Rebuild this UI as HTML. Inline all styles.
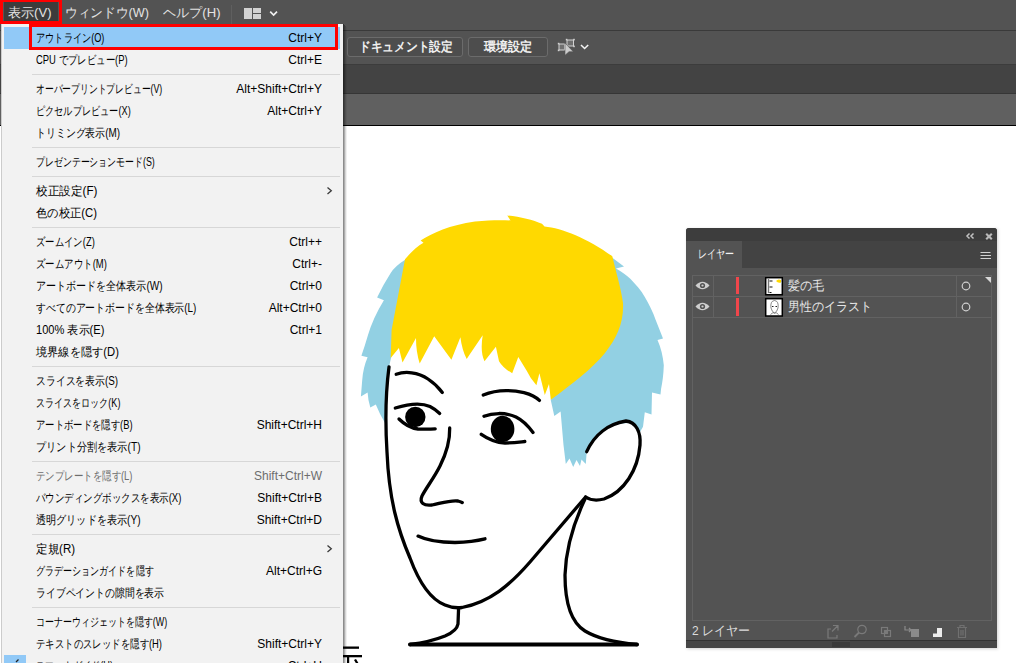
<!DOCTYPE html>
<html><head><meta charset="utf-8">
<style>
*{margin:0;padding:0;box-sizing:border-box}
html,body{width:1016px;height:663px;overflow:hidden;background:#fff;font-family:"Liberation Sans",sans-serif}
.a{position:absolute}
#menubar{left:0;top:0;width:1016px;height:30px;background:#535353}
#l30{left:0;top:30px;width:1016px;height:1px;background:#3a3a3a}
#ctrl{left:0;top:31px;width:1016px;height:33px;background:#535353}
#l64{left:0;top:64px;width:1016px;height:1px;background:#3c3c3c}
#tabs{left:0;top:65px;width:1016px;height:28px;background:#434343}
#l93{left:0;top:93px;width:1016px;height:1px;background:#363636}
#rul{left:0;top:94px;width:1016px;height:31px;background:#606060}
#l125{left:0;top:125px;width:1016px;height:1px;background:#000}
.mb{top:5px;font-size:13px;color:#e3e3e3;line-height:16px;white-space:nowrap}
.btn{top:37px;height:20px;border:1px solid #6b6b6b;border-radius:3px;background:#4d4d4d;color:#f0f0f0;font-size:12px;line-height:18px;text-align:center;font-weight:bold}
#menu{left:1px;top:24px;width:342px;height:660px;background:#f2f2f2}
.it{position:absolute;left:35px;width:290px;height:22px;font-size:12px;line-height:22px;color:#000;white-space:nowrap}
.it .k{position:absolute;right:4px;top:0}
.sep{position:absolute;left:31px;width:308px;height:1px;background:#d7d7d7}
.dis{color:#6d6d6d}
.fit{display:inline-block;white-space:nowrap;transform-origin:0 50%}
.bt{top:38px;height:18px;font-size:13px;line-height:18px;color:#f0f0f0;font-weight:bold;white-space:nowrap}
.pt{font-size:13px;line-height:14px;color:#e6e6e6;white-space:nowrap}
.arr{position:absolute;left:324px}
</style></head><body>
<div id="menubar" class="a"></div>
<div id="l30" class="a"></div>
<div id="ctrl" class="a"></div>
<div id="l64" class="a"></div>
<div id="tabs" class="a"></div>
<div id="l93" class="a"></div>
<div id="rul" class="a"></div>
<div id="l125" class="a"></div>

<!-- menubar items -->
<div class="a" style="left:0;top:0;width:62px;height:24px;background:#f00"></div><div class="a" style="left:3px;top:2px;width:56px;height:19px;background:#555"></div><div class="a" style="left:4px;top:2px;width:54px;height:19px;background:#3c3c3c"></div>
<div class="a mb" style="left:8px"><span class="fit" style="--w:43.5">表示(V)</span></div>
<div class="a mb" style="left:65px"><span class="fit" style="--w:84">ウィンドウ(W)</span></div>
<div class="a mb" style="left:163px"><span class="fit" style="--w:57.5">ヘルプ(H)</span></div>
<div class="a" style="left:231px;top:5px;width:1px;height:19px;background:#5f5f5f"></div>
<svg class="a" style="left:243px;top:7px" width="40" height="14">
 <rect x="1" y="1" width="8" height="11" fill="#d2d2d2"/>
 <rect x="10" y="1" width="8" height="5" fill="#d2d2d2"/>
 <rect x="10" y="7" width="8" height="5" fill="#d2d2d2"/>
 <polyline points="27.2,4.6 30.6,8 34,4.6" fill="none" stroke="#f0f0f0" stroke-width="1.7"/>
</svg>

<!-- control bar -->
<div class="a btn" style="left:347px;width:116px"></div><div class="a bt" style="left:359px"><span class="fit" style="--w:94">ドキュメント設定</span></div>
<div class="a btn" style="left:468px;width:80px"></div><div class="a bt" style="left:484px"><span class="fit" style="--w:48.5">環境設定</span></div>
<svg class="a" style="left:556px;top:36px" width="40" height="22">
 <rect x="3" y="8" width="5.5" height="6" fill="#6f6f6f" stroke="#d2d2d2" stroke-width="1"/>
 <rect x="11" y="4" width="6.5" height="6" fill="#6f6f6f" stroke="#d2d2d2" stroke-width="1"/>
 <g fill="#d2d2d2"><rect x="1.8" y="6.8" width="1.6" height="1.6"/><rect x="1.8" y="13.6" width="1.6" height="1.6"/><rect x="9.8" y="2.8" width="1.6" height="1.6"/><rect x="17.2" y="2.8" width="1.6" height="1.6"/><rect x="17.2" y="9.6" width="1.6" height="1.6"/></g>
 <polygon points="9,7 17.3,15.7 13,15.7 9,19.3" fill="#cccccc" stroke="#535353" stroke-width=".6"/>
 <polyline points="25,9 28.6,12.5 32.2,9" fill="none" stroke="#f2f2f2" stroke-width="1.6"/>
</svg>



<!-- illustration -->
<svg class="a" style="left:0;top:0" width="1016" height="663" viewBox="0 0 1016 663">
 <g fill="#92d0e3">
  <path d="M405.6,259.5 Q395,266 390.7,273 Q383,285 377.1,297.5 L383.9,300.2 Q373,318 368,335 Q364.5,347 361.4,355.8 L367.6,357.2 Q363,368 362.2,380.2 L360.9,396.5 L367.6,392.4 Q368,400 370.3,407.4 L375.8,404.6 Q380,415 385.3,423.6 L387,400 L389,367 L391,358 L400,300 Z"/>
  <path d="M611.3,257 L624,266.5 L616,268.5 C622,272 626,275 630.3,278.8 C636,285 641,290 644.8,296.9 C649,304 653,312 655.7,320 L663,338.5 L657.5,339.9 C661,348 663,356 663.8,365.3 C663.5,375 662.5,382 661.1,388.8 L660.5,394.5 L652,392.4 L651.5,414.5 L644.8,412.3 L643,426.8 L640,432 L630,423 L612,424 L598,433 L586.7,451.7 L585.8,464 L581.5,459.5 L580,466 L576.5,460 L573.2,467 L569.5,458.5 L565.8,464 L563.5,445 L560.6,411.4 L554.3,416 L550.7,399.7 L590,360 L620,310 Z"/>
 </g>
 <path fill="#ffd900" d="M405,259.3 C410,253 417,246.5 423.5,242.8 L420.6,240.6 C432,233 450,225 475,221.5 C490,220 502,220 510.5,220.5 L507.3,215.4 C520,216.5 533,220 542,223.8 L544.5,226.4 C562,228 588,238.5 612.3,256.2 C615.5,270 621,288 623,303 C624,322 617,338 605,353 C592,369 572,384 550.8,399.8 L549,384.1 L544.8,395 L539.4,373.3 L536.4,385.3 Q530,378 526.7,370.8 L518.3,357 L512.2,373.3 Q503,368 499,361.2 L495.9,346.7 L484.5,361.2 Q480,352 482.7,335.3 L470,354 L466.7,359 Q462,350 460.4,337.2 L451.4,359.8 L434.2,336.3 L419.7,363.4 Q416,352 416,338 L402.5,362.5 L398.9,348 L390.7,358 L391.6,330 Z"/>
 <g fill="none" stroke="#000" stroke-width="3.3" stroke-linecap="round" stroke-linejoin="round">
  <path d="M389,367 C386,390 385,420 387,452 C389,500 398,530 410,558 C420,585 432,600 445,605 C452,608 458,608 462,607.5 C490,602 510,585 530,562 L585.6,497"/>
  <path d="M586.7,451.7 C594,435 608,424 626,421 C636,422 641,432 640,445 C638,470 624,492 604,499 C596,501 590,500 585.6,497"/>
  <path d="M585,499 C576,518 566,545 565,575 C565,605 572,623 585,631 C600,640 620,643 637,644.5"/>
  <path d="M458.6,608 L458,624 C457,630 452,633 445,636 C435,640 422,643 410,644.5"/>
  <path d="M410,644.5 L637,644.5" stroke-width="3.8"/>
  <path d="M396.2,374.3 C405,371 418,372 428,379 C434,383 439,388 442.3,392.4"/>
  <path d="M483.3,395 C495,390 510,389.5 524,392.6 C531,394.5 536,397 539.4,400.4"/>
  <path d="M395.3,408 C405,405 420,402 430,406.5 C434,408.5 437,411 439.7,413.5"/>
  <path d="M399,419 C404,424 410,428 418,429 C424,429.5 430,429 435.2,428.9"/>
  <path d="M484,416.2 C492,413 505,412 516,417 C524,421 529,427 533,432.5"/>
  <path d="M481.3,434.3 C488,439 495,442.5 505,443 C513,443 520,442 524.8,441.5"/>
  <path d="M449.7,428 C450,440 447,452 440,466 C434,478 426,488 422,496 C419,503 424,506 432,505 C440,503.5 450,500 458,501 C460,501.5 461.5,502 462.3,502.6"/>
  <path d="M418,536.1 C426,540 440,542.5 455,542.5 C468,542 478,540.5 485,538.8"/>
 </g>
 <ellipse cx="415.3" cy="417" rx="10.2" ry="10.2" fill="#000"/>
 <ellipse cx="502.6" cy="429" rx="11.8" ry="13.2" fill="#000"/>
 <g fill="#000">
  <rect x="343" y="646.5" width="16" height="2.3"/>
  <rect x="342" y="655" width="20" height="2.3"/>
  <rect x="347" y="657" width="2.2" height="8"/>
  <path d="M354,660 l2,-1 l3,5 l-2,1z"/>
 </g>
</svg>

<!-- layers panel -->
<div class="a" style="left:686px;top:228px;width:311px;height:420px;box-shadow:1px 1px 3px rgba(0,0,0,.18)"></div>
<div class="a" style="left:686px;top:228px;width:311px;height:420px;background:#535353;border-radius:3px 3px 0 0;overflow:hidden">
 <div class="a" style="left:0;top:0;width:311px;height:13px;background:#3d3d3d"></div>
 <div class="a" style="left:0;top:13px;width:311px;height:27px;background:#434343"></div>
 <div class="a" style="left:0;top:13px;width:56px;height:27px;background:#535353"></div>
 <div class="a" style="left:12px;top:19px;font-size:12px;line-height:14px;color:#f2f2f2;white-space:nowrap"><span class="fit" style="--w:36">レイヤー</span></div>
 <svg class="a" style="left:276px;top:3px" width="34" height="30">
  <path d="M7.5,2.5 L5,5 L7.5,7.5 M11.5,2.5 L9,5 L11.5,7.5" fill="none" stroke="#c4c4c4" stroke-width="1.5"/>
  <path d="M24.2,2.7 L29.8,8.3 M29.8,2.7 L24.2,8.3" stroke="#b9b9b9" stroke-width="2.1"/>
  <path d="M19,24.5 h10 M19,27.5 h10" stroke="#d0d0d0" stroke-width="1"/>
 </svg>
 <svg class="a" style="left:294px;top:23px" width="12" height="10">
  <path d="M0.5,1.5 h10 M0.5,4.5 h10 M0.5,7.5 h10" stroke="#d0d0d0" stroke-width="1.2"/>
 </svg>
 <!-- list box -->
 <div class="a" style="left:6px;top:47px;width:300px;height:346px;border:1px solid #626262"></div>
 <div class="a" style="left:6px;top:68px;width:300px;height:1px;background:#626262"></div>
 <div class="a" style="left:6px;top:89px;width:300px;height:1px;background:#626262"></div>
 <div class="a" style="left:27px;top:47px;width:1px;height:43px;background:#626262"></div>
 <div class="a" style="left:270px;top:47px;width:1px;height:43px;background:#626262"></div>
 <polygon></polygon>
 <svg class="a" style="left:0;top:40px" width="311" height="60">
  <polygon points="299,9 305,9 305,15" fill="#d8d8d8"/>
  <g fill="#cecece"><path d="M9.5,17.5 Q16.5,10 23.5,17.5 Q16.5,25 9.5,17.5Z"/><path d="M9.5,38.5 Q16.5,31 23.5,38.5 Q16.5,46 9.5,38.5Z"/></g>
  <g fill="#535353"><circle cx="16.5" cy="17.5" r="2.6"/><circle cx="16.5" cy="38.5" r="2.6"/></g>
  <g fill="#cecece"><circle cx="16.5" cy="17.5" r="1.1"/><circle cx="16.5" cy="38.5" r="1.1"/></g>
  <rect x="50" y="9" width="3" height="17" fill="#f0464b"/>
  <rect x="50" y="30" width="3" height="18" fill="#f0464b"/>
  <rect x="79.7" y="9.7" width="16.6" height="17" fill="#fff" stroke="#000" stroke-width="1.5"/>
  <rect x="79.7" y="30.7" width="16.6" height="17.3" fill="#fff" stroke="#000" stroke-width="1.5"/>
  <path d="M90,13 q2,-2.5 5,-1 v2.5 q-3,1 -5,-1.5z" fill="#ffd900"/>
  <path d="M94.5,14.3 l1.2,0.3 v1.2z" fill="#92d0e3"/>
  <path d="M82.5,11 v14" stroke="#777" stroke-width="1.4"/>
  <path d="M83.5,13 h3 M83.5,19 h3 M83.5,24.5 h2" stroke="#111" stroke-width="1.2"/>
  <path d="M85,40 q-1,-7 3.5,-7.5 q4.5,0.5 3.5,7.5 q-1,4 -3.5,5 q-2.5,-1 -3.5,-5z M84.5,46.5 q3,-3 4,-1.5 q2,-1 4,1.5" stroke="#555" stroke-width=".7" fill="none"/>
  <path d="M86,38.5 h1.5 M89.5,38.5 h1.5" stroke="#222" stroke-width="1"/>
  <circle cx="280" cy="18" r="3.8" fill="none" stroke="#d0d0d0" stroke-width="1.2"/>
  <circle cx="280" cy="39" r="3.8" fill="none" stroke="#d0d0d0" stroke-width="1.2"/>
 </svg>
 <div class="a pt" style="left:102px;top:51px"><span class="fit" style="--w:36.5">髪の毛</span></div>
 <div class="a pt" style="left:102px;top:72px"><span class="fit" style="--w:84.5">男性のイラスト</span></div>
 <div class="a pt" style="left:6px;top:396px;color:#dcdcdc"><span class="fit" style="--w:58">2 レイヤー</span></div>
 <svg class="a" style="left:136px;top:394px" width="150" height="18">
  <g fill="none" stroke="#7a7a7a" stroke-width="1.2">
   <path d="M9,7 h-3 v9 h9 v-3 M11,3.5 h5 v5 M16,3.5 l-6,6"/>
   <circle cx="40" cy="7.5" r="4.2"/><path d="M37,10.5 l-4.5,4.5" stroke-width="1.8"/>
   <rect x="59.5" y="5.5" width="6" height="6"/><rect x="62.5" y="8.5" width="6" height="6"/>
  </g>
  <rect x="62.5" y="8.5" width="3" height="3" fill="#7a7a7a"/>
  <g fill="#8a8a8a"><rect x="89" y="7" width="8" height="8"/><path d="M83,4 v4 h6 M87,6 l2,2 l-2,2" stroke="#8a8a8a" stroke-width="1.2" fill="none"/></g>
  <path d="M111,6 h9 v9 h-9 l0,-3.5 l4,0 l0,-5.5z" fill="#ececec"/>
  <g fill="none" stroke="#707070" stroke-width="1.2"><path d="M135,5.5 h10 M138,5.5 v-2 h4 v2 M136.5,6 v9.5 h7 v-9.5 M139,8 v5.5 M141,8 v5.5"/></g>
 </svg>
 <div class="a" style="left:0;top:412px;width:311px;height:1px;background:#333"></div>
 <div class="a" style="left:0;top:413px;width:311px;height:7px;background:#464646"></div>
 <svg class="a" style="left:146px;top:414px" width="20" height="5"><path d="M1,0v5M3,0v5M5,0v5M7,0v5M9,0v5M11,0v5M13,0v5M15,0v5M17,0v5" stroke="#2e2e2e" stroke-width="1"/></svg>
</div>

<!-- menu -->
<div id="menu" class="a">
 
 <div class="a" style="left:3px;top:3px;width:336px;height:22px;background:#91c9f7"></div>
 <div class="a" style="left:28px;top:0;width:309px;height:26px;border:3px solid #f00"></div>
 <div class="it" style="top:3px"><span class="fit" style="--w:68.4">アウトライン(O)</span><span class="k">Ctrl+Y</span></div>
<div class="it" style="top:25px"><span class="fit" style="--w:91.6">CPU でプレビュー(P)</span><span class="k">Ctrl+E</span></div>
<div class="it" style="top:54px"><span class="fit" style="--w:126.3">オーバープリントプレビュー(V)</span><span class="k">Alt+Shift+Ctrl+Y</span></div>
<div class="it" style="top:76px"><span class="fit" style="--w:94.7">ピクセルプレビュー(X)</span><span class="k">Alt+Ctrl+Y</span></div>
<div class="it" style="top:98px"><span class="fit" style="--w:84.1">トリミング表示(M)</span></div>
<div class="it" style="top:127px"><span class="fit" style="--w:118.8">プレゼンテーションモード(S)</span></div>
<div class="it" style="top:156px"><span class="fit" style="--w:61.5">校正設定(F)</span></div><svg class="arr" style="top:156px" width="10" height="22"><polyline points="2.5,7.5 6.3,10.8 2.5,14.1" fill="none" stroke="#3a3a3a" stroke-width="1.3"/></svg>
<div class="it" style="top:178px"><span class="fit" style="--w:60.9">色の校正(C)</span></div>
<div class="it" style="top:207px"><span class="fit" style="--w:58.8">ズームイン(Z)</span><span class="k">Ctrl++</span></div>
<div class="it" style="top:229px"><span class="fit" style="--w:70.8">ズームアウト(M)</span><span class="k">Ctrl+-</span></div>
<div class="it" style="top:251px"><span class="fit" style="--w:126.6">アートボードを全体表示(W)</span><span class="k">Ctrl+0</span></div>
<div class="it" style="top:273px"><span class="fit" style="--w:160.4">すべてのアートボードを全体表示(L)</span><span class="k">Alt+Ctrl+0</span></div>
<div class="it" style="top:295px"><span class="fit" style="--w:68.4">100% 表示(E)</span><span class="k">Ctrl+1</span></div>
<div class="it" style="top:317px"><span class="fit" style="--w:82.9">境界線を隠す(D)</span></div>
<div class="it" style="top:346px"><span class="fit" style="--w:82">スライスを表示(S)</span></div>
<div class="it" style="top:368px"><span class="fit" style="--w:84.4">スライスをロック(K)</span></div>
<div class="it" style="top:390px"><span class="fit" style="--w:96.5">アートボードを隠す(B)</span><span class="k">Shift+Ctrl+H</span></div>
<div class="it" style="top:412px"><span class="fit" style="--w:104.6">プリント分割を表示(T)</span></div>
<div class="it dis" style="top:441px"><span class="fit" style="--w:96.5">テンプレートを隠す(L)</span><span class="k">Shift+Ctrl+W</span></div>
<div class="it" style="top:463px"><span class="fit" style="--w:145.3">バウンディングボックスを表示(X)</span><span class="k">Shift+Ctrl+B</span></div>
<div class="it" style="top:485px"><span class="fit" style="--w:104.6">透明グリッドを表示(Y)</span><span class="k">Shift+Ctrl+D</span></div>
<div class="it" style="top:514px"><span class="fit" style="--w:39.1">定規(R)</span></div><svg class="arr" style="top:514px" width="10" height="22"><polyline points="2.5,7.5 6.3,10.8 2.5,14.1" fill="none" stroke="#3a3a3a" stroke-width="1.3"/></svg>
<div class="it" style="top:536px"><span class="fit" style="--w:117.6">グラデーションガイドを隠す</span><span class="k">Alt+Ctrl+G</span></div>
<div class="it" style="top:558px"><span class="fit" style="--w:128.1">ライブペイントの隙間を表示</span></div>
<div class="it" style="top:587px"><span class="fit" style="--w:131.3">コーナーウィジェットを隠す(W)</span></div>
<div class="it" style="top:609px"><span class="fit" style="--w:126">テキストのスレッドを隠す(H)</span><span class="k">Shift+Ctrl+Y</span></div>
<div class="it" style="top:631px"><span class="fit" style="--w:77">スマートガイド(U)</span><span class="k">Ctrl+U</span></div>
<div class="sep" style="top:50px"></div>
<div class="sep" style="top:123px"></div>
<div class="sep" style="top:152px"></div>
<div class="sep" style="top:203px"></div>
<div class="sep" style="top:342px"></div>
<div class="sep" style="top:437px"></div>
<div class="sep" style="top:510px"></div>
<div class="sep" style="top:583px"></div>
</div>
<div class="a" style="left:1px;top:24px;width:1px;height:639px;background:#cccccc"></div>
<div class="a" style="left:343px;top:24px;width:1px;height:639px;background:rgba(0,0,0,.45)"></div>
<div class="a" style="left:344px;top:25px;width:1px;height:638px;background:rgba(0,0,0,.32)"></div>
<div class="a" style="left:345px;top:26px;width:1px;height:637px;background:rgba(0,0,0,.16)"></div>
<div class="a" style="left:346px;top:27px;width:1px;height:636px;background:rgba(0,0,0,.06)"></div>
<div class="a" style="left:4px;top:655px;width:22px;height:8px;background:#91c9f7"></div>
<svg class="a" style="left:4px;top:655px" width="22" height="8"><path d="M12,7 l2.5,-2.5" stroke="#222" stroke-width="1.3"/></svg>
<script>
(function(){var els=document.querySelectorAll('.fit');for(var i=0;i<els.length;i++){var e=els[i];var w=parseFloat(getComputedStyle(e).getPropertyValue('--w'));var r=e.getBoundingClientRect().width;if(w>0&&r>0){e.style.transform='scaleX('+(w/r).toFixed(4)+')';}}})();
</script>
</body></html>
